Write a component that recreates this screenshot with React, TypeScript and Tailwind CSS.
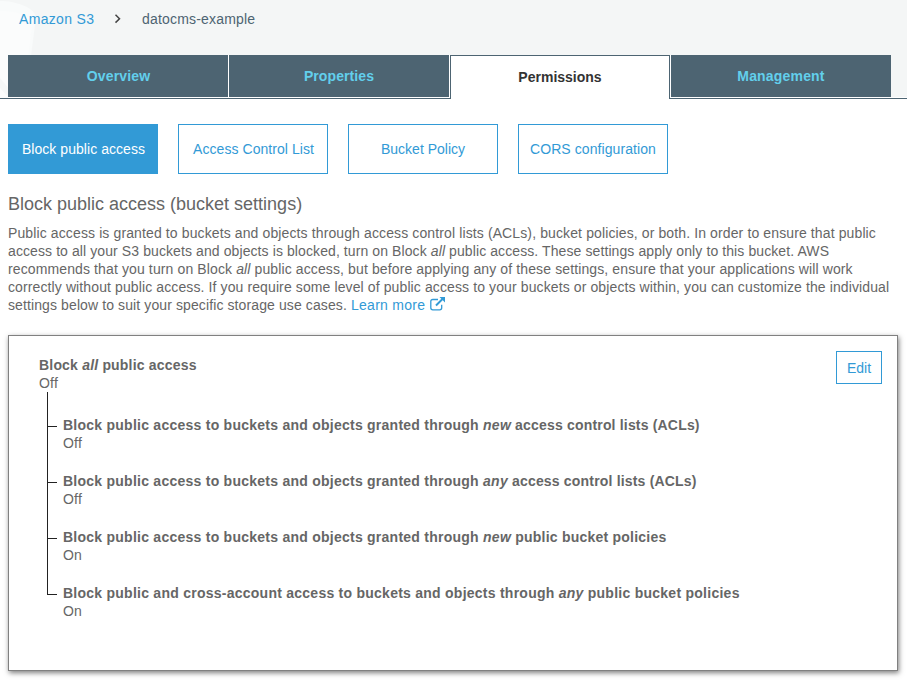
import React from "react";

const tabs = ["Overview", "Properties", "Permissions", "Management"];
const sections = [
  { name: "Block public access", spacing: "tracking-[0.05px] pl-px" },
  { name: "Access Control List", spacing: "tracking-[0.05px] pl-px" },
  { name: "Bucket Policy", spacing: "tracking-normal" },
  { name: "CORS configuration", spacing: "tracking-[0.08px]" },
];

const settings = [
  { before: "Block public access to buckets and objects granted through ", em: "new", after: " access control lists (ACLs)", value: "Off", tail: "tracking-[0.18px]" },
  { before: "Block public access to buckets and objects granted through ", em: "any", after: " access control lists (ACLs)", value: "Off", tail: "tracking-[0.18px]" },
  { before: "Block public access to buckets and objects granted through ", em: "new", after: " public bucket policies", value: "On", tail: "tracking-[0.23px]" },
  { before: "Block public and cross-account access to buckets and objects through ", em: "any", after: " public bucket policies", value: "On", tail: "tracking-[0.26px]" },
];

function Header() {
  return (
    <header className="relative h-[99px] overflow-hidden bg-[#f4f6f6]">
      <svg className="absolute left-0 top-0" width="50" height="99" viewBox="0 0 50 99" fill="none">
        <path d="M0 1C15 1 34 7 36 17L31 56V99H0Z" fill="#f9fbfb" />
        <path d="M0 11C10 11 22 12 33 20L28 56V99H0Z" fill="#fbfcfc" />
        <path d="M0 78L10 90V99L0 88Z" fill="#f5f7f7" />
      </svg>
      <div className="relative flex h-full flex-col">
        <nav className="flex h-[55px] items-start pl-[19px] pt-[10px] text-[14px] leading-[18px]">
          <a className="w-[95px] tracking-[0.32px] text-[#329ad6]">Amazon S3</a>
          <svg className="mt-[4px] w-[8px]" width="8" height="10" viewBox="0 0 8 10" fill="none" stroke="#444" strokeWidth="1.5">
            <path d="M1.5 0.8L5.5 4.7L1.5 8.6" />
          </svg>
          <span className="ml-[20px] tracking-[0.19px] text-[#4d6472]">datocms-example</span>
        </nav>
        <div className="flex h-[44px]">
          <div className="w-[8px] border-b border-[#4d6472]" />
          {tabs.map((tab) =>
            tab === "Permissions" ? (
              <div key={tab} className="flex h-[44px] w-[220px] items-center justify-center border-x border-t border-[#4d6472] bg-white pb-[2px] text-[14px] font-bold text-[#333]">
                {tab}
              </div>
            ) : (
              <div key={tab} className={`h-[44px] border-b border-[#4d6472] bg-white ${tab === "Properties" ? "w-[222px] px-px" : tab === "Management" ? "w-[221px] pl-px" : "w-[220px]"}`}>
                <div className={`flex h-[42px] items-center justify-center bg-[#4d6472] text-[14px] font-bold text-[#62cfec] ${tab === "Properties" ? "tracking-[0.1px]" : tab === "Overview" ? "pl-px tracking-[0.18px]" : "tracking-[0.18px]"}`}>{tab}</div>
              </div>
            )
          )}
          <div className="flex-1 border-b border-[#4d6472]">
            <div className="h-full border-b border-white" />
          </div>
        </div>
      </div>
    </header>
  );
}

function ExternalLinkIcon() {
  return (
    <svg className="ml-[5px] inline-block align-[-1px]" width="15" height="14" viewBox="0 0 15 14" fill="none" stroke="#329ad6">
      <path d="M8 2.5H2.8Q.8 2.5 .8 4.5V10.8Q.8 12.8 2.8 12.8H9.7Q11.7 12.8 11.7 10.8V7.8" strokeWidth="1.3" />
      <path d="M6 8.5L12.5 2" strokeWidth="2" />
      <path d="M9.5 0H15V5.5Z" fill="#329ad6" stroke="none" />
    </svg>
  );
}

export default function App() {
  return (
    <div className="h-[681px] w-[907px] overflow-hidden bg-white font-['Liberation_Sans',Arial,sans-serif] text-[14px] leading-[18px] text-[#666]">
      <Header />
      <main className="px-[8px] pt-[25px]">
        <div className="flex gap-[20px]">
          {sections.map((section, index) => (
            <button key={section.name} className={`h-[50px] w-[150px] border border-[#329ad6] ${section.spacing} ${index === 0 ? "bg-[#329ad6] text-white" : "bg-white text-[#329ad6]"}`}>
              {section.name}
            </button>
          ))}
        </div>
        <h1 className="mt-[18px] text-[18px] leading-[24px]">Block public access (bucket settings)</h1>
        <p className="mt-[8px] whitespace-nowrap tracking-[0.118px]">
          Public access is granted to buckets and objects through access control lists (ACLs), bucket policies, or both. In order to ensure that public<br />
          <span className="tracking-[0.095px]">access to all your S3 buckets and objects is blocked, turn on Block <em>all</em> public access. These settings apply only to this bucket. AWS</span><br />
          recommends that you turn on Block <em>all</em> public access, but before applying any of these settings, ensure that your applications will work<br />
          <span className="tracking-[0.111px]">correctly without public access. If you require some level of public access to your buckets or objects within, you can customize the individual</span><br />
          <span className="tracking-[0.107px]">settings below to suit your specific storage use cases.</span> <a className="tracking-[0.27px] text-[#329ad6]">Learn more<ExternalLinkIcon /></a>
        </p>
        <section className="mt-[21px] flex h-[336px] w-[890px] items-start justify-between border border-[#808080] pb-0 pl-[30px] pr-[15px] pt-[15px] shadow-[1px_2px_5px_rgba(0,0,0,0.5)]">
          <div className="pt-[5px]">
            <h2 className="font-bold tracking-[0.19px]">Block <em>all</em> public access</h2>
            <p className="tracking-[0.2px]">Off</p>
            <div className="ml-[8px]">
              {settings.map((setting, index) => (
                <div key={index} className="flex">
                  <div className={`w-[10px] ${index === 0 ? "h-[35px]" : "h-[56px]"} border-b border-l border-[#222]`} />
                  <div className={`ml-[6px] h-[56px] whitespace-nowrap ${index === 0 ? "mt-[24px]" : "mt-[45px]"} -mb-[45px]`}>
                    <h3 className="font-bold tracking-[0.25px]">{setting.before}<em>{setting.em}</em><span className={setting.tail}>{setting.after}</span></h3>
                    <p className="tracking-[0.2px]">{setting.value}</p>
                  </div>
                </div>
              ))}
            </div>
          </div>
          <button className="h-[33px] w-[46px] border border-[#329ad6] text-[#329ad6]">Edit</button>
        </section>
      </main>
    </div>
  );
}
